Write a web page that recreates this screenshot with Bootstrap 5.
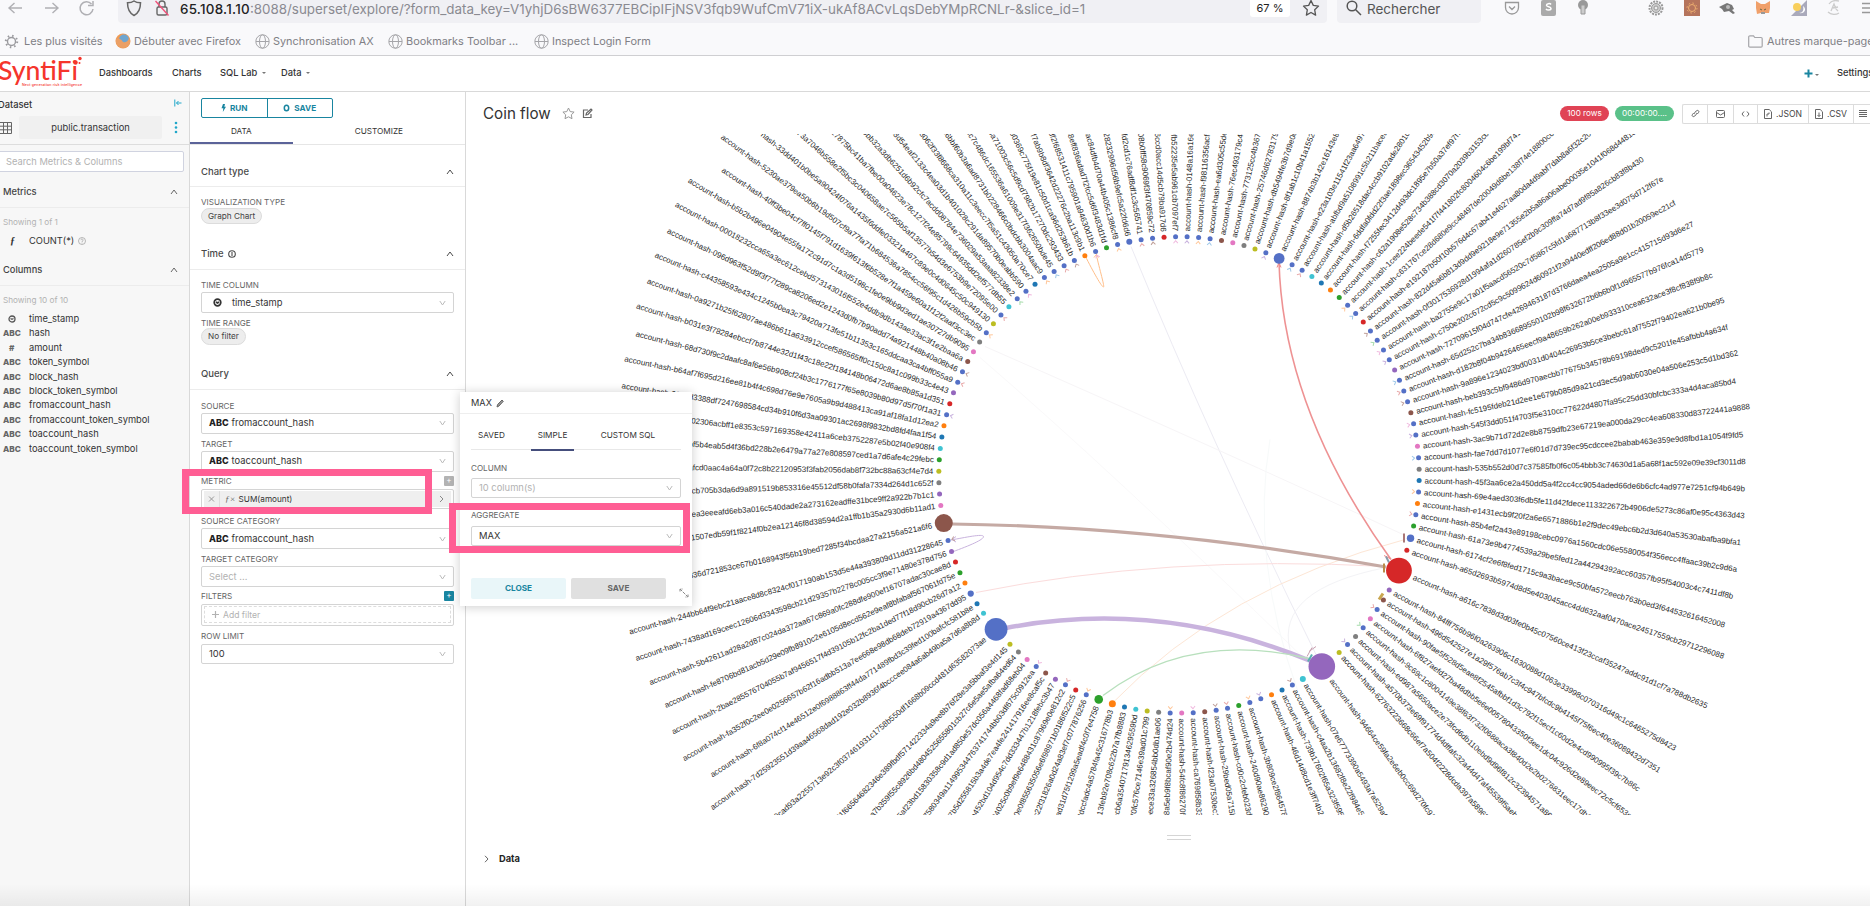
<!DOCTYPE html>
<html lang="en">
<head>
<meta charset="utf-8">
<title>Coin flow</title>
<link href="https://cdn.jsdelivr.net/npm/bootstrap@5.3.0/dist/css/bootstrap.min.css" rel="stylesheet">
<style>
html,body{height:906px;overflow:hidden}
body{font-family:Inter,"Liberation Sans",sans-serif;font-size:9.3px;line-height:12px;color:#333;background:#fff}
svg{display:block;fill:none;flex:none}
svg:not([stroke]){stroke:currentColor}
.tracks{display:grid;align-items:center;white-space:nowrap}
.browser{height:55.5px;background:#f9f9fb;border-bottom:1px solid #cfcfd2;color:#777}
.topline{height:23px;grid-template-columns:5px 36px 36px 41px 1209px 10px 144px 23px 37px 36px 71px 36px 35px 36px 36px 35px 36px 14px}
.topline svg{margin-top:-7px}
.urlbar{height:23px;background:#f0f0f4;border-radius:0 0 4px 4px;grid-template-columns:7px 28px 27px 1070px 55px 20px;color:#8a8a91;font-size:13.4px}
.urlbar b{font-weight:500;color:#222;letter-spacing:.25px}
.address{margin-top:-6px}
.zoomlevel{height:17px;width:40px;margin-top:-6px;border-radius:0 0 3px 3px;font-size:11px;line-height:16px;color:#222}
.finder{height:23px;background:#f0f0f4;border-radius:0 0 4px 4px;font-size:13.5px;color:#555;padding-left:8px}
.bookmarks{height:32px;padding-top:4px;font-size:10.9px;color:#808085;grid-template-columns:4px 20px 91px 19px 121px 18px 115px 18px 128px 18px 1196px 19px 105px}
.appnav{height:36px;border-bottom:1px solid #d9d9d9;font-weight:500;font-size:9.3px;grid-template-columns:99px 73px 48px 61px 1523px 33px 34px}
.caret{display:inline-block;border:2px solid transparent;border-top-color:#777;border-bottom:0;vertical-align:2px;margin-left:2px}
.workspace{height:814px}
.dataset{width:190px;background:#f7f7f7;border-right:1px solid #d9d9d9}
.controls{width:276px;border-right:1px solid #d9d9d9}
.muted{color:#b2b2b2}
.dsname{background:#f0f0f0;width:143px;height:23px;line-height:23px;border-radius:2px;text-align:center;margin-left:7px}
.searchbox{height:21px;width:186px;margin:6px 0 0 -2px;border:1px solid #d0d3e0;border-radius:2px;background:#fff;line-height:19px;padding-left:7px;color:#b2b2b2}
.sect{height:30px;border-bottom:1px solid #ececec;padding:0 11px 0 3px;font-weight:500;color:#444}
.fieldrow{height:14.4px;grid-template-columns:29px auto}
.abc{font-weight:800;font-size:8.2px;color:#666;padding-left:3px}
.runbtns{width:132px;height:20px;margin:6px 0 0 11px;border:1px solid #1985a0;border-radius:2px;color:#1985a0;font-weight:700;font-size:8.2px}
.runbtns>div{flex:1}
.runbtns>div+div{border-left:1px solid #1985a0}
.paneltabs{height:27.5px;border-bottom:1px solid #e6e6e6;font-size:8.2px;margin-bottom:12px}
.paneltabs>div{width:103px;text-align:center;padding-top:7px}
.paneltabs>div:first-child{border-bottom:2px solid #5b6399}
.psect{height:30px;border-bottom:1px solid #ececec;padding:0 11px;font-size:9.5px;font-weight:500;color:#4a4a4a}
.lab{font-size:8.1px;line-height:10px;color:#666;text-transform:uppercase;white-space:nowrap}
.fld{padding:0 11px}
.sel{height:20.5px;border:1px solid #d4d4d4;border-radius:2px;padding:0 7px;margin-top:2.3px;font-size:9.4px}
.sel .ty{font-weight:800;font-size:9px;margin-right:3px;color:#222}
.tag{display:inline-block;background:#ededed;border:1px solid #dcdcdc;border-radius:9px;height:16.5px;line-height:15px;padding:0 6px;font-size:8.2px;color:#444}
.plus{width:10px;height:10px;background:#b3b3b3;color:#fff;line-height:9px;text-align:center;border-radius:1px}
.metricpill{height:16px;background:#efefef;flex:1;font-size:8.2px}
.dashed{border:1px dashed #ddd;height:17px;flex:1;margin:0 -5px;padding-left:7px;color:#b2b2b2;font-size:8.6px}
.stage{width:1404px}
.titlebar{height:36px;padding-top:8px;grid-template-columns:17px 79px 20px 978px 55px 67px 188px}
.titlebar h1{font-size:15.2px;font-weight:400;margin:2px 0 0;color:#333}
.pillrow{height:15px;line-height:15px;border-radius:8px;color:#fff;text-align:center;font-size:8.2px}
.exports{height:20px;border:1px solid #dcdcdc;border-right:0;border-radius:2px 0 0 2px;grid-template-columns:25px 26px 24px 51px 45px 17px;font-size:8.6px;color:#444}
.exports>div{height:18px;border-right:1px solid #dcdcdc}
.exports>div:last-child{border:0}
.flow{height:681px;margin-top:6px}
.flow text{font:7.95px "Liberation Sans",Arial,sans-serif;fill:#2a2a2a;stroke:none}
.pop{left:460px;top:392px;width:232px;height:214px;background:#fff;box-shadow:0 1px 10px rgba(0,0,0,.2)}
.pop .head{height:22px;border-bottom:1px solid #eee;padding:1px 0 0 11px;font-size:9.2px}
.poptabs{margin:12px 11px 0;height:24px;border-bottom:1px solid #e8e8e8;font-size:8.2px;grid-template-columns:60px 43px 108px;text-align:center}
.poptabs>div{height:25px;padding-top:3px}
.poptabs .on{border-bottom:2px solid #454e7c}
.popbtn{width:95px;height:20.5px;flex:none;border-radius:2px;line-height:20px;font-size:8.2px;font-weight:700;text-align:center}
.hilite{border:7px solid #ff5e94}
.shade{left:0;right:0;bottom:0;height:22px;background:linear-gradient(to bottom,transparent,rgba(0,0,0,.055))}
</style>
</head>
<body class="position-relative">

<header class="browser">
  <div class="topline tracks">
    <i></i>
    <svg width="20" height="18" viewBox="0 0 20 18" stroke="#b0b0b4" stroke-width="1.400"><path d="M17 9H4M9.500 4L4 9l5.500 5"/></svg>
    <svg width="20" height="18" viewBox="0 0 20 18" stroke="#b0b0b4" stroke-width="1.400"><path d="M4 9h13M11.500 4L17 9l-5.500 5"/></svg>
    <svg width="20" height="18" viewBox="0 0 20 18" stroke="#b0b0b4" stroke-width="1.500"><path d="M14.500 5A6.500 6.500 0 1 0 16 10M16 2v4.500h-5"/></svg>
    <div class="urlbar tracks">
      <i></i>
      <svg width="18" height="18" viewBox="0 0 18 18" stroke="#666" stroke-width="1.500"><path d="M9 2c2 1.500 4 1.800 6.500 1.800C15.500 9 14 14 9 16.500 4 14 2.500 9 2.500 3.800 5 3.800 7 3.500 9 2z"/></svg>
      <svg width="18" height="18" viewBox="0 0 18 18" stroke="#666" stroke-width="1.400"><rect x="4" y="8" width="10" height="8" rx="1.500"/><path d="M6 8V5a3 3 0 0 1 6 0v3"/><path d="M2.500 2l13 14.500" stroke="#f0527a"/></svg>
      <div class="address"><b>65.108.1.10</b>:8088/superset/explore/?form_data_key=V1yhjD6sBW6377EBCipIFjNSV3fqb9WufCmV71iX-ukAf8ACvLqsDebYMpRCNLr-&amp;slice_id=1</div>
      <div class="zoomlevel bg-white text-center">67 %</div>
      <svg width="18" height="18" viewBox="0 0 18 18" stroke="#555" stroke-width="1.300" stroke-linejoin="round" style="margin-left:-3px"><path d="M9 1.500l2.300 4.900 5.200.7-3.800 3.700.9 5.300L9 13.500l-4.600 2.600.9-5.300L1.500 7.100l5.200-.7z"/></svg>
    </div>
    <i></i>
    <div class="finder d-flex align-items-center"><svg width="18" height="18" viewBox="0 0 18 18" stroke="#555" stroke-width="1.500"><circle cx="7" cy="7" r="4.800"/><path d="M10.500 10.500L16 16"/></svg><span style="margin:-6px 0 0 4px">Rechercher</span></div>
    <i></i>
    <svg width="16" height="16" viewBox="0 0 16 16" stroke="#999" stroke-width="1.300"><path d="M1.500 2.500h13v5a6.500 6.500 0 0 1-13 0zM5 6.500l3 3 3-3"/></svg>
    <svg width="16" height="16" viewBox="0 0 16 16" stroke="none"><rect width="15" height="16" rx="2" fill="#aaa"/><path d="M10 4.500c-1-1.500-4.500-1-4.500.8 0 2 4.500 1 4.500 3.200 0 2-4 2-5 .3" stroke="#fff" stroke-width="1.500"/></svg>
    <svg width="16" height="18" viewBox="0 0 16 18" stroke="none"><circle cx="6" cy="6" r="5" fill="#999"/><path d="M4 6h4v9H4z" fill="#ccc" stroke="#999"/></svg>
    <svg width="16" height="16" viewBox="0 0 16 16" stroke="#999"><circle cx="8" cy="8" r="6.500" stroke-width="2" stroke-dasharray="2 1"/><circle cx="8" cy="8" r="4.500" fill="#ccc"/><circle cx="8" cy="8" r="2" fill="#eee"/></svg>
    <svg width="16" height="16" viewBox="0 0 16 16" stroke="#f0b070"><rect width="16" height="16" fill="#b5745c" stroke="none"/><circle cx="8" cy="8" r="3.500"/><circle cx="8" cy="8" r="5" stroke-dasharray="1.500 2.400"/></svg>
    <svg width="16" height="16" viewBox="0 0 16 16" stroke="none"><path d="M0 7l4-2 4-2 5 2 2 4-2 1 3 3-2 1-4-3-5 1-2-3z" fill="#777"/><circle cx="9" cy="7" r="2" fill="#bbb"/></svg>
    <svg width="16" height="16" viewBox="0 0 16 16" stroke="none"><path d="M1 1l5 3h4l5-3v7l-1 5-4 0-2 1-2-1-4 1-1-6z" fill="#f0a06a"/><path d="M5 9l2 1M11 9l-2 1" stroke="#664"/><path d="M6 12h4v2H6z" fill="#999"/></svg>
    <svg width="16" height="16" viewBox="0 0 16 16" stroke="none"><path d="M0 16L16 0v16z" fill="#aab"/><circle cx="6" cy="7" r="4" fill="#f8cf5c"/><path d="M8 13c4 0 5-3 4-7 4 3 2 8-4 7z" fill="#fff"/></svg>
    <svg width="16" height="16" viewBox="0 0 16 16" stroke="#ccc" stroke-width="1.300"><path d="M3 4c2-3 6-4 10-3M2 12c3 3 8 3 11 1M5 11l3-7 2 5 2 2M7 8l5-1"/></svg>
    <svg width="16" height="16" viewBox="0 0 16 16" stroke="#999" stroke-width="1.300"><path d="M0 3.500h16M0 8h16M0 12.500h16"/></svg>
  </div>
  <div class="bookmarks tracks">
    <i></i>
    <svg width="15" height="15" viewBox="0 0 15 15" stroke="#9a9a9e" stroke-width="1.400"><circle cx="7.500" cy="7.500" r="4"/><circle cx="7.500" cy="7.500" r="5.700" stroke-width="2" stroke-dasharray="1.500 2.970"/></svg>
    <span>Les plus visités</span>
    <svg width="16" height="16" viewBox="0 0 16 16" stroke="none"><circle cx="8" cy="8" r="7.500" fill="#ef9b55"/><circle cx="9" cy="6.500" r="5" fill="#6fa5cf"/><path d="M1 5c3 0 5 1 7 4 2 1 5 0 6-4 3 6-2 10-6 10S0 12 1 5z" fill="#eba066"/></svg>
    <span>Débuter avec Firefox</span>
    <svg width="15" height="15" viewBox="0 0 15 15" stroke="#a5a5a9"><circle cx="7.500" cy="7.500" r="6.700"/><ellipse cx="7.500" cy="7.500" rx="3" ry="6.700"/><path d="M1 7.500h13"/></svg>
    <span>Synchronisation AX</span>
    <svg width="15" height="15" viewBox="0 0 15 15" stroke="#a5a5a9"><circle cx="7.500" cy="7.500" r="6.700"/><ellipse cx="7.500" cy="7.500" rx="3" ry="6.700"/><path d="M1 7.500h13"/></svg>
    <span>Bookmarks Toolbar ...</span>
    <svg width="15" height="15" viewBox="0 0 15 15" stroke="#a5a5a9"><circle cx="7.500" cy="7.500" r="6.700"/><ellipse cx="7.500" cy="7.500" rx="3" ry="6.700"/><path d="M1 7.500h13"/></svg>
    <span>Inspect Login Form</span>
    <svg width="15" height="13" viewBox="0 0 15 13" stroke="#a5a5a9" stroke-width="1.200"><path d="M.7 2A1.200 1.200 0 0 1 2 .8h3.500l1.300 1.700H13a1.200 1.200 0 0 1 1.200 1.200V11a1.200 1.200 0 0 1-1.200 1.200H2A1.200 1.200 0 0 1 .7 11z"/></svg>
    <span>Autres marque-pages</span>
  </div>
</header>

<nav class="appnav tracks">
  <svg width="84" height="34" viewBox="0 0 84 34" stroke="none"><g fill="#f5352c"><text x="-2" y="24" font-family="Lato,sans-serif" font-size="27" textLength="80" lengthAdjust="spacingAndGlyphs">SyntiFi</text><text x="22" y="30" font-size="3.600" textLength="60">Next generation risk intelligence</text><circle cx="75.500" cy="6.500" r="2.200"/><circle cx="80" cy="2.500" r="1.700"/><circle cx="79.500" cy="7" r="1"/></g></svg>
  <span>Dashboards</span><span>Charts</span><span>SQL Lab <i class="caret"></i></span><span>Data <i class="caret"></i></span>
  <span class="d-flex align-items-center"><svg width="9" height="9" viewBox="0 0 9 9" stroke="#1985a0" stroke-width="2"><path d="M4.500.5v8M.5 4.500h8"/></svg><i class="caret mt-1"></i></span><span>Settings</span>
</nav>

<main class="workspace d-flex">
  <aside class="dataset overflow-hidden">
    <div class="d-flex justify-content-between" style="height:24px;padding:7px 7px 0 0"><span style="margin-left:-2px;font-weight:500">Dataset</span>
      <svg width="8" height="8" viewBox="0 0 8 8" stroke="#20a7c9"><path d="M.8.5v7M7.500 4h-5M4.500 2l-2 2 2 2"/></svg></div>
    <div class="d-flex align-items-center" style="height:24px">
      <svg width="12" height="12" viewBox="0 0 12 12" stroke="#666"><path d="M-2 .5h13.500v11H-2M0 4.200h11.500M0 7.800h11.500M3.500.5v11M7.500.5v11"/></svg>
      <div class="dsname">public.transaction</div>
      <svg width="4" height="13" viewBox="0 0 4 13" stroke="none" style="margin-left:12px"><g fill="#20a7c9"><circle cx="2" cy="2" r="1.300"/><circle cx="2" cy="6.500" r="1.300"/><circle cx="2" cy="11" r="1.300"/></g></svg>
    </div>
    <div style="height:5px;border-bottom:1px solid #ddd"></div>
    <div class="searchbox">Search Metrics &amp; Columns</div>
    <div style="height:6px"></div>
    <div class="sect d-flex align-items-center justify-content-between"><span>Metrics</span><svg width="8" height="6" viewBox="0 0 8 6" stroke="#666"><path d="M1 5l3-4 3 4"/></svg></div>
    <div class="muted" style="padding:8px 0 0 3px;height:26px;font-size:8.200px">Showing 1 of 1</div>
    <div class="fieldrow tracks"><span style="padding-left:10px;font:italic bold 10px 'Liberation Serif',serif">ƒ</span><span class="d-flex align-items-center gap-1">COUNT(*) <svg width="8" height="8" viewBox="0 0 8 8" stroke="#999" stroke-width=".7"><circle cx="4" cy="4" r="3.500"/><path d="M2.900 3.200c0-1.700 2.300-1.400 2.200 0C5 4 4 4 4 5M4 5.600v.8"/></svg></span></div>
    <div style="height:8px"></div>
    <div class="sect d-flex align-items-center justify-content-between"><span>Columns</span><svg width="8" height="6" viewBox="0 0 8 6" stroke="#666"><path d="M1 5l3-4 3 4"/></svg></div>
    <div class="muted" style="padding:8px 0 0 3px;height:26px;font-size:8.200px">Showing 10 of 10</div>
    <div class="fieldrow tracks"><svg width="8" height="8" viewBox="0 0 8 8" stroke="#555" style="margin-left:8px" stroke-width="1.300"><circle cx="4" cy="4" r="3"/><path d="M2.500 3.500L4 4.300l1.500-.8"/></svg><span>time_stamp</span></div>
    <div class="fieldrow tracks"><span class="abc">ABC</span><span>hash</span></div>
    <div class="fieldrow tracks"><span class="abc" style="padding-left:9px">#</span><span>amount</span></div>
    <div class="fieldrow tracks"><span class="abc">ABC</span><span>token_symbol</span></div>
    <div class="fieldrow tracks"><span class="abc">ABC</span><span>block_hash</span></div>
    <div class="fieldrow tracks"><span class="abc">ABC</span><span>block_token_symbol</span></div>
    <div class="fieldrow tracks"><span class="abc">ABC</span><span>fromaccount_hash</span></div>
    <div class="fieldrow tracks"><span class="abc">ABC</span><span>fromaccount_token_symbol</span></div>
    <div class="fieldrow tracks"><span class="abc">ABC</span><span>toaccount_hash</span></div>
    <div class="fieldrow tracks"><span class="abc">ABC</span><span>toaccount_token_symbol</span></div>
  </aside>

  <section class="controls">
    <div class="runbtns d-flex text-center align-items-stretch">
      <div class="d-flex align-items-center justify-content-center gap-1"><svg width="5" height="8" viewBox="0 0 5 8" stroke="none"><path d="M2 0h2L3.300 2.800H5L1.800 8l.5-3.800H.5z" fill="#1985a0"/></svg>RUN</div>
      <div class="d-flex align-items-center justify-content-center gap-1"><svg width="7" height="8" viewBox="0 0 7 8" stroke-width="1.500"><ellipse cx="3.500" cy="4" rx="2.200" ry="2.800"/></svg>SAVE</div>
    </div>
    <div class="paneltabs d-flex"><div>DATA</div><div style="width:173px">CUSTOMIZE</div></div>
    <div class="psect d-flex align-items-center justify-content-between"><span>Chart type</span><svg width="8" height="6" viewBox="0 0 8 6"><path d="M1 5l3-4 3 4"/></svg></div>
    <div class="fld" style="height:52.500px;padding-top:9.500px"><div class="lab">Visualization type</div><div class="tag" style="margin-top:1px">Graph Chart</div></div>
    <div class="psect d-flex align-items-center justify-content-between"><span class="d-flex align-items-center gap-1">Time <svg width="8" height="8" viewBox="0 0 8 8" stroke-width="1.100"><circle cx="4" cy="4" r="3.300"/><path d="M4 2v4"/></svg></span><svg width="8" height="6" viewBox="0 0 8 6"><path d="M1 5l3-4 3 4"/></svg></div>
    <div class="fld" style="height:90px;padding-top:10.500px">
      <div class="lab">Time column</div>
      <div class="sel d-flex align-items-center justify-content-between"><span class="d-flex align-items-center"><svg width="9" height="9" viewBox="0 0 9 9" style="margin:0 10px 0 4px" stroke-width="1.700"><circle cx="4.500" cy="4.500" r="3.300"/><path d="M3 4l1.500 1L6 4"/></svg>time_stamp</span><svg width="7" height="6" viewBox="0 0 7 6" stroke="#bbb"><path d="M.8 1l2.700 4 2.700-4"/></svg></div>
      <div class="lab" style="margin-top:5px">Time range</div><div class="tag" style="margin-top:.5px">No filter</div>
    </div>
    <div class="psect d-flex align-items-center justify-content-between"><span>Query</span><svg width="8" height="6" viewBox="0 0 8 6"><path d="M1 5l3-4 3 4"/></svg></div>
    <div class="fld" style="padding-top:11.400px">
      <div class="lab">Source</div>
      <div class="sel d-flex align-items-center justify-content-between"><span><span class="ty">ABC</span>fromaccount_hash</span><svg width="7" height="6" viewBox="0 0 7 6" stroke="#bbb"><path d="M.8 1l2.700 4 2.700-4"/></svg></div>
      <div class="lab" style="margin-top:5.200px">Target</div>
      <div class="sel d-flex align-items-center justify-content-between"><span><span class="ty">ABC</span>toaccount_hash</span><svg width="7" height="6" viewBox="0 0 7 6" stroke="#bbb"><path d="M.8 1l2.700 4 2.700-4"/></svg></div>
      <div class="lab d-flex justify-content-between" style="margin-top:4.200px">Metric<span class="plus">+</span></div>
      <div class="sel d-flex align-items-center" style="padding:0 2px;margin-top:2.800px"><div class="metricpill d-flex align-items-center"><svg width="16" height="16" viewBox="0 0 16 16" stroke="#999"><path d="M5 5.500l5 5M10 5.500l-5 5"/><path d="M15.500 0v16" stroke="#ddd"/></svg><span style="margin:0 3px 0 5px;color:#666;font:italic 9px 'Liberation Serif',serif">ƒ×</span>SUM(amount)</div><div class="metricpill flex-grow-0" style="padding:4px 6px"><svg width="6" height="8" viewBox="0 0 6 8" stroke="#888"><path d="M1 1l3 3-3 3"/></svg></div></div>
      <div class="lab" style="margin-top:7px">Source category</div>
      <div class="sel d-flex align-items-center justify-content-between"><span><span class="ty">ABC</span>fromaccount_hash</span><svg width="7" height="6" viewBox="0 0 7 6" stroke="#bbb"><path d="M.8 1l2.700 4 2.700-4"/></svg></div>
      <div class="lab" style="margin-top:5.200px">Target category</div>
      <div class="sel muted d-flex align-items-center justify-content-between">Select ...<svg width="7" height="6" viewBox="0 0 7 6" stroke="#bbb"><path d="M.8 1l2.700 4 2.700-4"/></svg></div>
      <div class="lab d-flex justify-content-between" style="margin-top:4.500px">Filters<span class="plus" style="background:#1985a0">+</span></div>
      <div class="sel d-flex align-items-center" style="height:22px"><div class="dashed d-flex align-items-center gap-1"><svg width="7" height="7" viewBox="0 0 7 7"><path d="M3.500 0v7M0 3.500h7" stroke-width="1.200"/></svg>Add filter</div></div>
      <div class="lab" style="margin-top:5.500px">Row limit</div>
      <div class="sel d-flex align-items-center justify-content-between">100<svg width="7" height="6" viewBox="0 0 7 6" stroke="#bbb"><path d="M.8 1l2.700 4 2.700-4"/></svg></div>
    </div>
  </section>

  <section class="stage overflow-hidden">
    <div class="titlebar tracks">
      <i></i><h1>Coin flow</h1>
      <svg width="13" height="13" viewBox="0 0 13 13" stroke="#999"><path d="M6.500 1l1.700 3.600 3.900.5-2.800 2.700.7 3.900-3.500-1.900L3 11.700l.7-3.900L.9 5.100l3.900-.5z"/></svg>
      <svg width="11" height="11" viewBox="0 0 11 11" stroke="#666" stroke-width="1.200"><path d="M9 6v3.500H1.500V2H6M4 7l.5-2L9 1l1 1-4 4.500z"/></svg>
      <div class="pillrow" style="background:#e04355;width:49px">100 rows</div>
      <div class="pillrow" style="background:#5ac189;width:59px">00:00:00....</div>
      <div class="exports tracks">
        <div class="d-flex align-items-center justify-content-center"><svg width="9" height="9" viewBox="0 0 9 9" stroke="#666"><path d="M3.800 5.200c-1-1 .1-1.700 1.400-3.200C6.500.500 8.800 2 7.500 3.600L6.300 5M5.200 3.800c1 1-.1 1.700-1.400 3.200C2.500 8.500.2 7 1.500 5.400L2.700 4"/></svg></div>
        <div class="d-flex align-items-center justify-content-center"><svg width="9" height="8" viewBox="0 0 9 8" stroke="#666"><rect x=".5" y=".5" width="8" height="7" rx="1"/><path d="M.5 2.500l4 2.500 4-2.500"/></svg></div>
        <div class="d-flex align-items-center justify-content-center"><svg width="9" height="6" viewBox="0 0 9 6" stroke="#666"><path d="M3 .5L1 3l2 2.500M6 .5L8 3 6 5.500"/></svg></div>
        <div class="d-flex align-items-center justify-content-center gap-1"><svg width="8" height="10" viewBox="0 0 8 10" stroke="#666"><path d="M.5.5h4.700l2.300 2.300v6.700h-7zM3 7.500V5h2V3.500"/></svg>.JSON</div>
        <div class="d-flex align-items-center justify-content-center gap-1"><svg width="8" height="10" viewBox="0 0 8 10" stroke="#666"><path d="M.5.5h4.700l2.300 2.300v6.700h-7zM4 3.500v4M2.500 6L4 7.500 5.500 6"/></svg>.CSV</div>
        <div class="d-flex align-items-center justify-content-center"><svg width="8" height="7" viewBox="0 0 8 7" stroke="#666"><path d="M0 .5h8M0 2.500h8M0 4.500h8M0 6.500h8"/></svg></div>
      </div>
    </div>
    <svg class="flow" id="flow" width="1404" viewBox="466 134.500 1404 681"></svg>
    <div class="d-flex flex-column" style="margin:20px 0 0 701px;width:24px;gap:3px"><div style="height:1px;background:#d5d5d5"></div><div style="height:1px;background:#d5d5d5"></div></div>
    <div class="d-flex align-items-center fw-bold" style="margin:13px 0 0 17px;gap:9px;color:#222"><svg width="7" height="8" viewBox="0 0 7 8" stroke="#666"><path d="M2 .8L5 4 2 7.200"/></svg>Data</div>
  </section>
</main>

<div class="pop position-absolute">
  <div class="head d-flex align-items-center gap-1">MAX <svg width="8" height="9" viewBox="0 0 8 9" stroke="#666"><path d="M1 8l.6-2.500L6 1l1.300 1.300L3 7z" fill="#999"/></svg></div>
  <div class="poptabs tracks"><div class="pe-2" style="text-align:left;padding-left:7px">SAVED</div><div class="on">SIMPLE</div><div>CUSTOM SQL</div></div>
  <div style="padding:13px 11px 0">
    <div class="lab">Column</div>
    <div class="sel muted d-flex align-items-center justify-content-between" style="margin-top:4.500px">10 column(s)<svg width="7" height="6" viewBox="0 0 7 6" stroke="#bbb"><path d="M.8 1l2.700 4 2.700-4"/></svg></div>
    <div class="lab" style="margin-top:12px">Aggregate</div>
    <div class="sel d-flex align-items-center justify-content-between" style="margin-top:5.500px">MAX<svg width="7" height="6" viewBox="0 0 7 6" stroke="#bbb"><path d="M.8 1l2.700 4 2.700-4"/></svg></div>
    <div class="d-flex align-items-center" style="margin-top:32px;gap:5px"><div class="popbtn" style="background:#e9f6f9;color:#1985a0">CLOSE</div><div class="popbtn" style="background:#e0e0e0;color:#666">SAVE</div><svg width="10" height="10" viewBox="0 0 10 10" stroke="#888" style="margin:10px 0 0 8px"><path d="M1 1l8 8M1 3.500V1h2.500M9 6.500V9H6.500" stroke-dasharray="3 1"/></svg></div>
  </div>
</div>
<div class="hilite position-absolute" style="left:182px;top:469px;width:250px;height:45px"></div>
<div class="hilite position-absolute" style="left:449px;top:503px;width:241px;height:50px"></div>
<div class="shade position-absolute"></div>

<script>
// Nodes clockwise from three o'clock: colour key, radius, hash (part of it for labels cut by the frame)
const C={b:'#5470c6',r:'#d62728',o:'#ff7f0e',g:'#2ca02c',p:'#9467bd',n:'#8c564b',k:'#e377c2',y:'#7f7f7f',l:'#bcbd22',t:'#3fc3d2',s:'#1f77b4'};
const N=`s 45f3aa6ce2a450dd5a4f2cc4cc9054aded66de6b6cfc4ad977e7251cf94b649b
b 69e4aed303f6db5fe11d42fdece113322672b4906de5273c86af0e95c4363d43
o e1431ecb9f20f2a6e6571886b1e2f9dec49ebc6b2d3d640a53530abafba9bfa1
b 85b4ef2a43e89198cebc0976a1560cdc06e5580054f356ecc4ffaac39b2c9d6a
g 61a73e9b4774539a29be5fed12a44294392acc60357fb95f54003c4c7411df8b
b3.7 6174cf2e6f8fed1715c9a3bace9c50bfa572eecb763b0ed3f644532616452008
r a65d2693b5974d8d5e403045acc4dd632aaf0470ace24517559cb29712296088
r12.9 a616c7838d3d03fe0b45c07560ce413f23ccaf35247addc91d1cf7a788db2635
p 84fff756b96f0a263906c1630088d1063e33998c070316d49c1c6465275d8423
n 496d542527e1a29f576ab7c3f4c947bfcdc9b4145f75f6ec40e36089432d7351
b 90fae5f528d5eae8f2545afbbf1d3c792f15ecf1c60d2e4cd990995f39c7b86c
k 6f827aefd27ba48dbb5e6e00578043350f3ee1dc04c926d2e89eec72c5cf653c
b 9c69c1c8004149e38f63f732f0688aca3f840d2e2b0276831eec17db1
y ed987a5650ace2e73fcd6db110ebd9d96f812c32394571a869
b a570b373e69f91774d4dffafc32a44d47af45539f5aeb2
l 62763223668c66ef7a504f2228dcda397a589
p13.3 94664ce59fa2e6eb0cc69d270fc91
t3 07e67773390a5493a7a529a6
b c4aa2b13682f8e22f984e5
s 739b17602f65a323f595
o 46d14d8cd1e3ff74b2
b -
b 3b809ce2f8645784
g 240d90ae86290
b cd0c2cfeb023d
b 29bed05a715b
n f23a07530ec1
b ca769858b33
k 54fc8f86270f
b 8a5eb9f8bcaf90e2b474d24
y ece33a326854bb0db1ae06
l 70fc576ce7146e39ad01c799
t ccb6a35407179134629559bd
s 13feb92e708c622b7a7fb8883
o3.5 dccfadc4a5784fa45c316778b3
g4.3 ad31d75f1299a5eadf4c0f7e4758
b c22f31826a0d24a83ef7c077876256
r e0f855635056e6f98971b0186f522c5
b 4025c0b9ef9e6488431c87969e0e812c2
p a452bd104d954c7dd333447b1218febc3b47
n 7b5d255815b3a4de7ea4fe241417916ee8caf5c
b 580349a114995344763741744bb03df675c0912ea
k 5af23bd15830358c9d1ad850e57dc056a4468fad68eb04
y 9ca7b359f55c8926bd4804525655801cb27c6e5ae5afba64ed64
l 71f66564682346e389fbdf571422334a9ee8b76f28e3a5bbaf3e4d145
b11.4 0cad93a2255713e92c3f037461931c1758b550df1668b09ccd481d63582073ae
t 7d25923551d39aa46568dad192e032b8936f4bcccee084a6ab49ba5a7d6a8b8d
s 6f8a074cf14e46512e0f6988863ff44da771489fbd3c39fed100bafcfc581b8e
b3.1 fa352f0c2ee0e0256657b62f16adbb513a7ee668e98db68deb72919a4367dd95
o 2bae285576704055b7af9456517f4d39105b12fc2ba1ded77f18d90cb26d7a12
g fe8706bd81acb5d29e09fb8910c2e6105d8ecd562e9eaf8bfabaf567061fd75e
r 5b42611ad28a2d87c024da372aa67c869a0fc288dfe900ef16707adac30cae8d
p 7438ad169ceec12606d3343598cb21d29357b2278c005cc3f9e71480e378d756
b 244bb64f9ebc21aace8d8c8324cf017190ab153d5e44a393809d11dd31228645
n9 36d721853ce67b0168943f56b19bed7285f34bcdaa27a2156a521a6f6
k 1507edb59f1f8214f0b2ea12146f8d38594d2a1ffb1b35a2930d6b11ad1
p ea3eeeafd6eb3a016c540dade2a273162eadffe31bce9ff2a922b7b1c1
y cb705b3da6d9a891519b853316e45512df58b0fafa7334d264d1c652f
l fcd0aac4a64a0f72c8b22120953f3fab2056dab8f732bc88a63cf4e7d4
g f5b4eab5d4f36bd228b2e6479a77a27e808597ced1a7d6afe4c29febc
t 02306acbff1e8353c597169358e42411a6ceb3752287e5b02f40e908f4
s 3388df7247698584cd34b910f6d3aa09301ac2698f9832bd8fd4faa1f54
o b64af7f695d216ee81b4f4c698d76e9e7605a9b9d488413ca91af18fa1d12ea2
b 68d730f9c2daafc8af6e56b908cf24b3c1776177f65e8039b80d97d5f70f1a31
r b031e3f78284ebccf7b8744e32d1f43c18e22f184148b06472d6ae8b85a1d351
p 0a9271b25f62807ae486b611a633912ccef586565ff0c150c8a1c099b33c4e43
b c44358593e434c1245b0ea3c79420a713fe51b11353c165ddcaa3ca4bff055a9
b 096d963f52d9f3f77f289ca8206ed2e1243d0fb7b90add74a921448b40a08b46
n 00018232cca65a3ec612cebd573143016f552e4ddb9db143ae33ac3f1e2baa6a
k b5b2b496e04904e55fa172c91d7c1a3d5198c1fe0e9bb9d3ed1ae30727db9095
y 40ff3be04cf7ff0145f791d1639f613f6b528e7f1a459e60a1f12f2aaf3cc3ec
b 5230ae379ea50b6b19d507cf9a77fa71b684536a7854cc56f95c1d426b59cb5b
l 3dd401b0be5a90424f076a1435f6ddfe03321a467c89e0c4d0645c50c949130
b 3a7046b558e2f5bc3c040658ae7c565b5af13577b54d3e6753b9e72095e00
t 17875bc41ba7fbe00a04623e78c127f24e85799c64935dd2ef577db55
b bb32a3db6251d6b92cfc7acdd08784e736029a53aaa82338e2
b 3d54eaf2133c4ea03d1b401028c291da89570b0eabb590
s 062f33f8668ca310a11c3eecc7f5a51c43050a70ce7
b 6bbf60b3a6ad8731b0228466c0bdcbb3004aac9
b cc7c486dc165536a61009e317f362650bde45
b a71003c56c5d9cd7982b17270dc293433
b 0369c775f19e81c50d1ca96d253b61b
o 97f7ab9b8df3642d22276c2ba113c9b1
b df2f68531411c795901a94630d1b6
g 8eff836adad7f2fcc5d6f3483d1fd
b ac84dfb4d70a44b405c1386cf8
b3 28232996d56b9efc5a22fd6d6
b fd2cd1c76adf8df1c3c565741
b 08b0ff58c9069f3f470859c72
r 6ccd0acc14d5cb79ba917d6
b fb52235e5ab961cb7097ef7
b 0148a16a16e
b f98116356ac
b ea6d305c55d
n 76ec493179c4
k 773125cc4b36
y 25746d62783179
l db5494fe3b7d9e0
b 8f1ab1c10b41a1552
b5.4 8874b3b142e16143e
b e23a103e11541f23aa6497
b abfbd9a5108991c5b211bace
t d5b26518dac4ccb9102ade2801
s 6ddfa0fdd22f3ae1898ec36543452b9
o f7255fec3412d493dc1895e7b50a37ef97
g c62a1908e528c734b388cd3070a2039b3153
b 1cee224beede541f7f441802fc8004604c6be199bf74
b c631767ce28d680e9cc48497de20049d6be138f74e18800
r e192187b50f10b576d4c67ab41e4627aa80da4d9abf7dab8a6f32c20
b 822d45a6b813d9dd9e9218e9e71355e2b5a86a06abe00035e1041f068d4481
b 0f3017536928d1994afa1d260785ef2b9c309ffa74d7ad9f85a826cb83f8b43
b ba2755e9c17a01f5aacd56520c7d5867c5fd1a687713b8f33ee3d075d712f67e
b c750e202c672cd5c9c5099624d60921f2a9440edff206ed88d01b20059ec21cf
p 72709615f04d747cfe4269463187d3766daea4ea2505a9e1cc415715d93d6e27
b 65d252c7ba34b836689550102b98f632672b6b6b0f1d965577b976fca14d5779
b d182b8f04b9426465eecf9a48659b262a00eb933310cea632ace3f8cf838f9b8c
b 9a896e1234023bd0031d0404c26953b5ce3bebc61af7552f79402ea621b0be95
n beb393c5bf9486d970aecbb77675b34578b69198ded9c5201fe45afbbb4a634f
b fc5195fdeb21d2ee1e679b085d9a21cd3ec5d9ab6030e04a506e253c5d1bd362
b 545f3dd051f4703f5e310cc77622d4807fa95c25dd30bfcbc333a4d4aca85bd4
k 3ac9b71d72d2e8b8759dfb23e67219ea000da29cc4ea608330d83722441a9888
b fae7dd7d1077e6f01d7d739ec95cdccee2babab463e359e9d8fbd1a1054f9fd5
y 535b552d0d7c37585fb0f6c054bbb3c74630d1a5a68f1ac592e09e39cf3011d8`.split('\n').map(l=>{
  const [a,h]=l.split(' ');
  return{c:a[0],r:parseFloat(a.slice(1))||2.5,h};
});
const CX=1179,CY=475.4,R=240.2,RY=238.2;
const half=n=>Math.asin(n.r/R);
const gap=(2*Math.PI-2*N.reduce((s,n)=>s+half(n),0))/N.length;
let out=`<g>
<path d="M1131 247Q1210 440 1316 655" stroke="#ecebf3"/>
<path d="M985 347Q1220 450 1403 535" stroke="#f7f5f7"/>
<path d="M980 358Q1110 470 1300 655" stroke="#faf9fa"/>
<path d="M1290 650Q1275 590 1386 568" stroke="#f3f3f6"/>
<path d="M1298 692Q1250 560 1270 440" stroke="#f7fafa"/>
<path d="M1112 704Q1225 587 1405 540" stroke="#fde6d5"/>
<path d="M976 593Q1165 555 1386 567" stroke="#fbdcdc"/>
<path d="M952 524.500Q1160 527 1386 567.500" stroke="#c5aaa4" stroke-width="3.200"/>
<path d="M1006 628.500Q1160 599 1312 662" stroke="#c9b3de" stroke-width="4.500"/>
<path d="M1103 696Q1190 630 1311 659.500" stroke="#b8e0bd" stroke-width="1.400"/>
<path d="M1279 262Q1283 410 1391 560" stroke="#ee9293" stroke-width="1.600"/>
<path d="M1277 268l2-5 2 5M1384 556l6 3" stroke="#e88"/>
<path d="M1085 256C1093 272 1102 288 1103.500 287.500S1098 265 1096 253M1094 258l2.500-3 2 3" stroke="#ffbf8a"/>
<path d="M952 552.500C970 546 984 540 983.500 537S965 538 951 540.500M956 537l-4 3 4 2.500" stroke="#c9b3de"/>
<path d="M1307 657l5-9M1309 652l7-5" stroke="#c9a0b0"/><path d="M1308 662l4-7" stroke="#5ab0b0" stroke-width="2"/>
<path d="M1384 564v9" stroke="#b98a4a" stroke-width="2"/><path d="M1386 557l3 6" stroke="#89a" stroke-width="2"/>
<path d="M1404 534v9" stroke="#a77" stroke-width="2"/><path d="M1379 600l4-6" stroke="#c9a64f" stroke-width="3"/></g>`;
const tint=['#c9b3de','#ffc79a','#9fc8e8','#e8a9a9','#c0a09a','#a5dcaa','#f0b8de'];
let a=0;
N.forEach((n,i)=>{
  a+=gap/2+half(n);
  const x=CX+R*Math.cos(a),y=CY+RY*Math.sin(a),d=a*180/Math.PI;
  out+=`<circle cx="${x}" cy="${y}" r="${n.r}" fill="${C[n.c]}" stroke="none"/>`;
  if(n.c=='b'&&n.r<3)out+=`<path transform="translate(${x} ${y}) rotate(${d})" d="M-6.500 -2.200L-4 0l-2.500 2.200" stroke="${tint[i%7]}"/>`;
  if(n.h!='-'){
    const left=Math.cos(a)<0, pad=n.h.repeat(6).slice(0,Math.max(0,64-n.h.length));
    const s='account-hash-'+(left?pad+n.h:n.h+pad), o=n.r+3;
    out+=left?`<text transform="translate(${x} ${y}) rotate(${d+180})" x="${-o}" y="2.800" text-anchor="end">${s}</text>`
             :`<text transform="translate(${x} ${y}) rotate(${d})" x="${o}" y="2.800">${s}</text>`;
  }
  a+=gap/2+half(n);
});
document.getElementById('flow').innerHTML=out;
</script>
<script src="https://cdn.jsdelivr.net/npm/bootstrap@5.3.0/dist/js/bootstrap.bundle.min.js"></script>
</body>
</html>
